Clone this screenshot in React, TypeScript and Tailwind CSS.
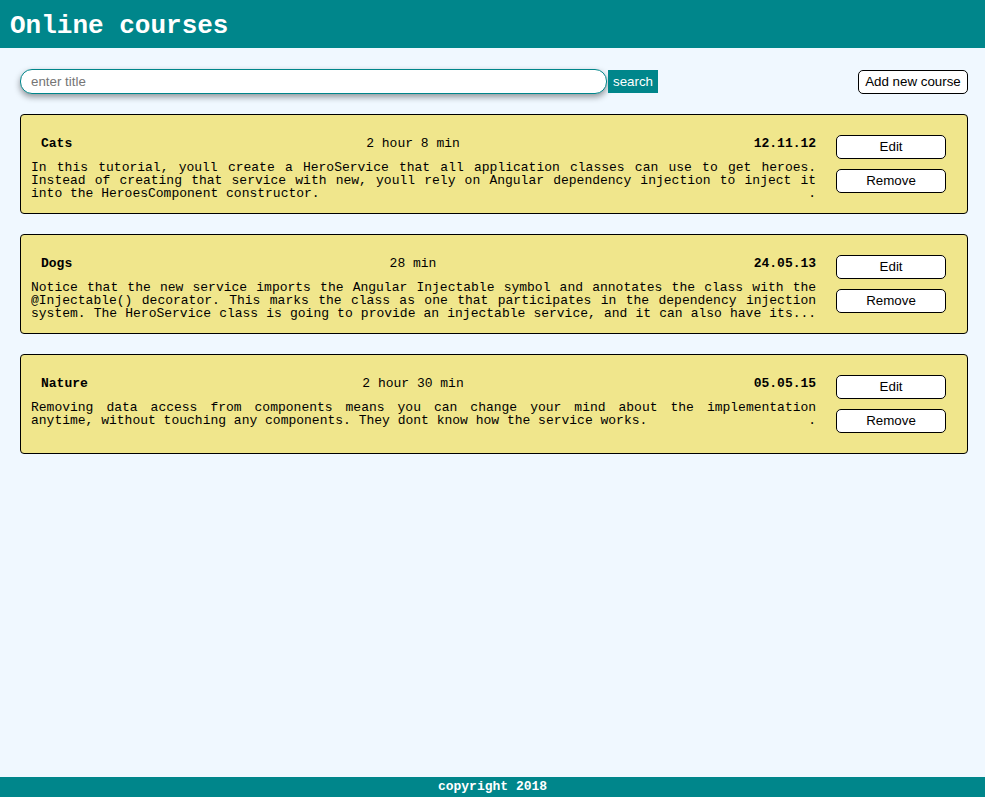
import React from "react";

type Course = {
  title: string;
  duration: string;
  date: string;
  description: string;
  justifyLast?: boolean;
};

const courses: Course[] = [
  {
    title: "Cats",
    duration: "2 hour 8 min",
    date: "12.11.12",
    description:
      "In this tutorial, youll create a HeroService that all application classes can use to get heroes. Instead of creating that service with new, youll rely on Angular dependency injection to inject it into the HeroesComponent constructor.",
  },
  {
    title: "Dogs",
    duration: "28 min",
    date: "24.05.13",
    description:
      "Notice that the new service imports the Angular Injectable symbol and annotates the class with the @Injectable() decorator. This marks the class as one that participates in the dependency injection system. The HeroService class is going to provide an injectable service, and it can also have its..",
    justifyLast: true,
  },
  {
    title: "Nature",
    duration: "2 hour 30 min",
    date: "05.05.15",
    description:
      "Removing data access from components means you can change your mind about the implementation anytime, without touching any components. They dont know how the service works.",
  },
];

const mono = { fontFamily: '"Liberation Mono", "Courier New", monospace' };
const sans = { fontFamily: '"Liberation Sans", Arial, sans-serif' };

function CourseCard({ c }: { c: Course }) {
  return (
    <div className="ml-5 mr-[17px] flex h-[100px] gap-5 rounded border border-black bg-[#F0E68C] pl-[10px] pr-[21px] pt-5 text-black">
      <div className="mt-px flex w-[786px] flex-col" style={mono}>
        <div className="grid grid-cols-[272px_200px_1fr] pl-[10px] text-[13px] leading-4">
          <span className="font-bold">{c.title}</span>
          <span className="text-center">{c.duration}</span>
          <span className="text-right font-bold">{c.date}</span>
        </div>
        <div
          className={
            "mt-[9px] h-[39px] overflow-hidden text-justify text-[13px] leading-[13px] " +
            (c.justifyLast ? "[text-align-last:justify]" : "")
          }
        >
          {c.description}
          <span className="float-right">.</span>
        </div>
      </div>
      <div className="flex w-[110px] flex-col gap-[10px]" style={sans}>
        <button className="h-6 rounded-[5px] border border-black bg-white text-[13.33px] text-black">
          Edit
        </button>
        <button className="h-6 rounded-[5px] border border-black bg-white text-[13.33px] text-black">
          Remove
        </button>
      </div>
    </div>
  );
}

export default function App() {
  return (
    <div className="flex min-h-screen flex-col bg-[#F0F8FF]">
      <header className="flex h-12 items-center bg-[#00868B] pl-[10px] pt-[3px]">
        <h1 className="text-[26px] font-bold leading-none text-white" style={mono}>
          Online courses
        </h1>
      </header>

      <div className="ml-5 mr-[17px] mt-[21px] flex items-center" style={sans}>
        <input
          type="text"
          placeholder="enter title"
          className="h-[25px] w-[587px] rounded-[12px] border border-[#00868B] bg-white px-[10px] text-[13.33px] text-black shadow-[0_3px_6px_rgba(0,0,0,0.4)] outline-none placeholder:text-[#757575]"
        />
        <button className="ml-px h-[23px] bg-[#00868B] px-[5px] text-[13.33px] text-white">
          search
        </button>
        <button className="ml-auto h-6 w-[110px] rounded-[5px] border border-black bg-white text-[13.33px] text-black">
          Add new course
        </button>
      </div>

      <div className="mt-5 flex flex-col gap-5">
        {courses.map((c) => (
          <CourseCard key={c.title} c={c} />
        ))}
      </div>

      <footer
        className="mt-auto flex h-5 items-center justify-center bg-[#00868B] text-[13px] font-bold text-white"
        style={mono}
      >
        copyright 2018
      </footer>
    </div>
  );
}
